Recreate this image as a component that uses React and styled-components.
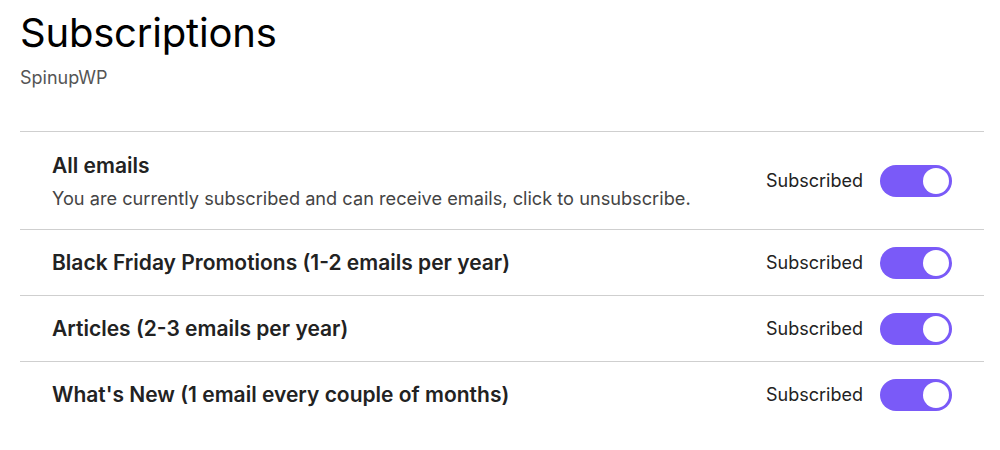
import React from 'react';
import styled, { createGlobalStyle } from 'styled-components';

const GlobalStyle = createGlobalStyle`
    body {
        margin: 0;
        background: #fff;
        font-family: Inter, "Noto Sans", sans-serif;
        color: #1d1d1f;
    }
`;

const Page = styled.div`
    padding: 8px 16px 0 20px;
`;

const Title = styled.h1`
    margin: 0;
    font-size: 40px;
    font-weight: 400;
    line-height: 50px;
    color: #000;
    letter-spacing: -0.2px;
`;

const Subtitle = styled.div`
    margin-top: 9px;
    font-size: 18px;
    color: #555;
`;

const List = styled.div`
    margin-top: 43px;
    border-top: 1px solid #cfcfcf;
`;

const Row = styled.div`
    display: flex;
    align-items: center;
    justify-content: space-between;
    min-height: ${p => (p.tall ? '97px' : '65px')};
    padding: 0 32px;
    border-bottom: ${p => (p.last ? 'none' : '1px solid #cfcfcf')};
`;

const Info = styled.div`
    display: flex;
    flex-direction: column;
    gap: 9px;
`;

const Name = styled.div`
    font-size: 21px;
    font-weight: 600;
    color: #222;
`;

const Desc = styled.div`
    font-size: 18.2px;
    color: #444;
`;

const Status = styled.div`
    display: flex;
    align-items: center;
    gap: 17px;
    font-size: 18px;
    color: #222;
`;

const Toggle = styled.div`
    width: 72px;
    height: 32px;
    border-radius: 16px;
    background: ${p => (p.on ? '#7a5af8' : '#ccc')};
    display: flex;
    align-items: center;
    justify-content: ${p => (p.on ? 'flex-end' : 'flex-start')};
    padding: 0 3px;
    box-sizing: border-box;
`;

const Knob = styled.div`
    width: 26px;
    height: 26px;
    border-radius: 50%;
    background: #fff;
`;

const items = [
    { name: 'All emails', desc: 'You are currently subscribed and can receive emails, click to unsubscribe.' },
    { name: 'Black Friday Promotions (1-2 emails per year)' },
    { name: 'Articles (2-3 emails per year)' },
    { name: "What's New (1 email every couple of months)" },
];

export default function App() {
    return (
        <Page>
            <GlobalStyle />
            <Title>Subscriptions</Title>
            <Subtitle>SpinupWP</Subtitle>
            <List>
                {items.map((item, i) => (
                    <Row key={item.name} tall={!!item.desc} last={i === items.length - 1}>
                        <Info>
                            <Name>{item.name}</Name>
                            {item.desc && <Desc>{item.desc}</Desc>}
                        </Info>
                        <Status>
                            Subscribed
                            <Toggle on>
                                <Knob />
                            </Toggle>
                        </Status>
                    </Row>
                ))}
            </List>
        </Page>
    );
}
